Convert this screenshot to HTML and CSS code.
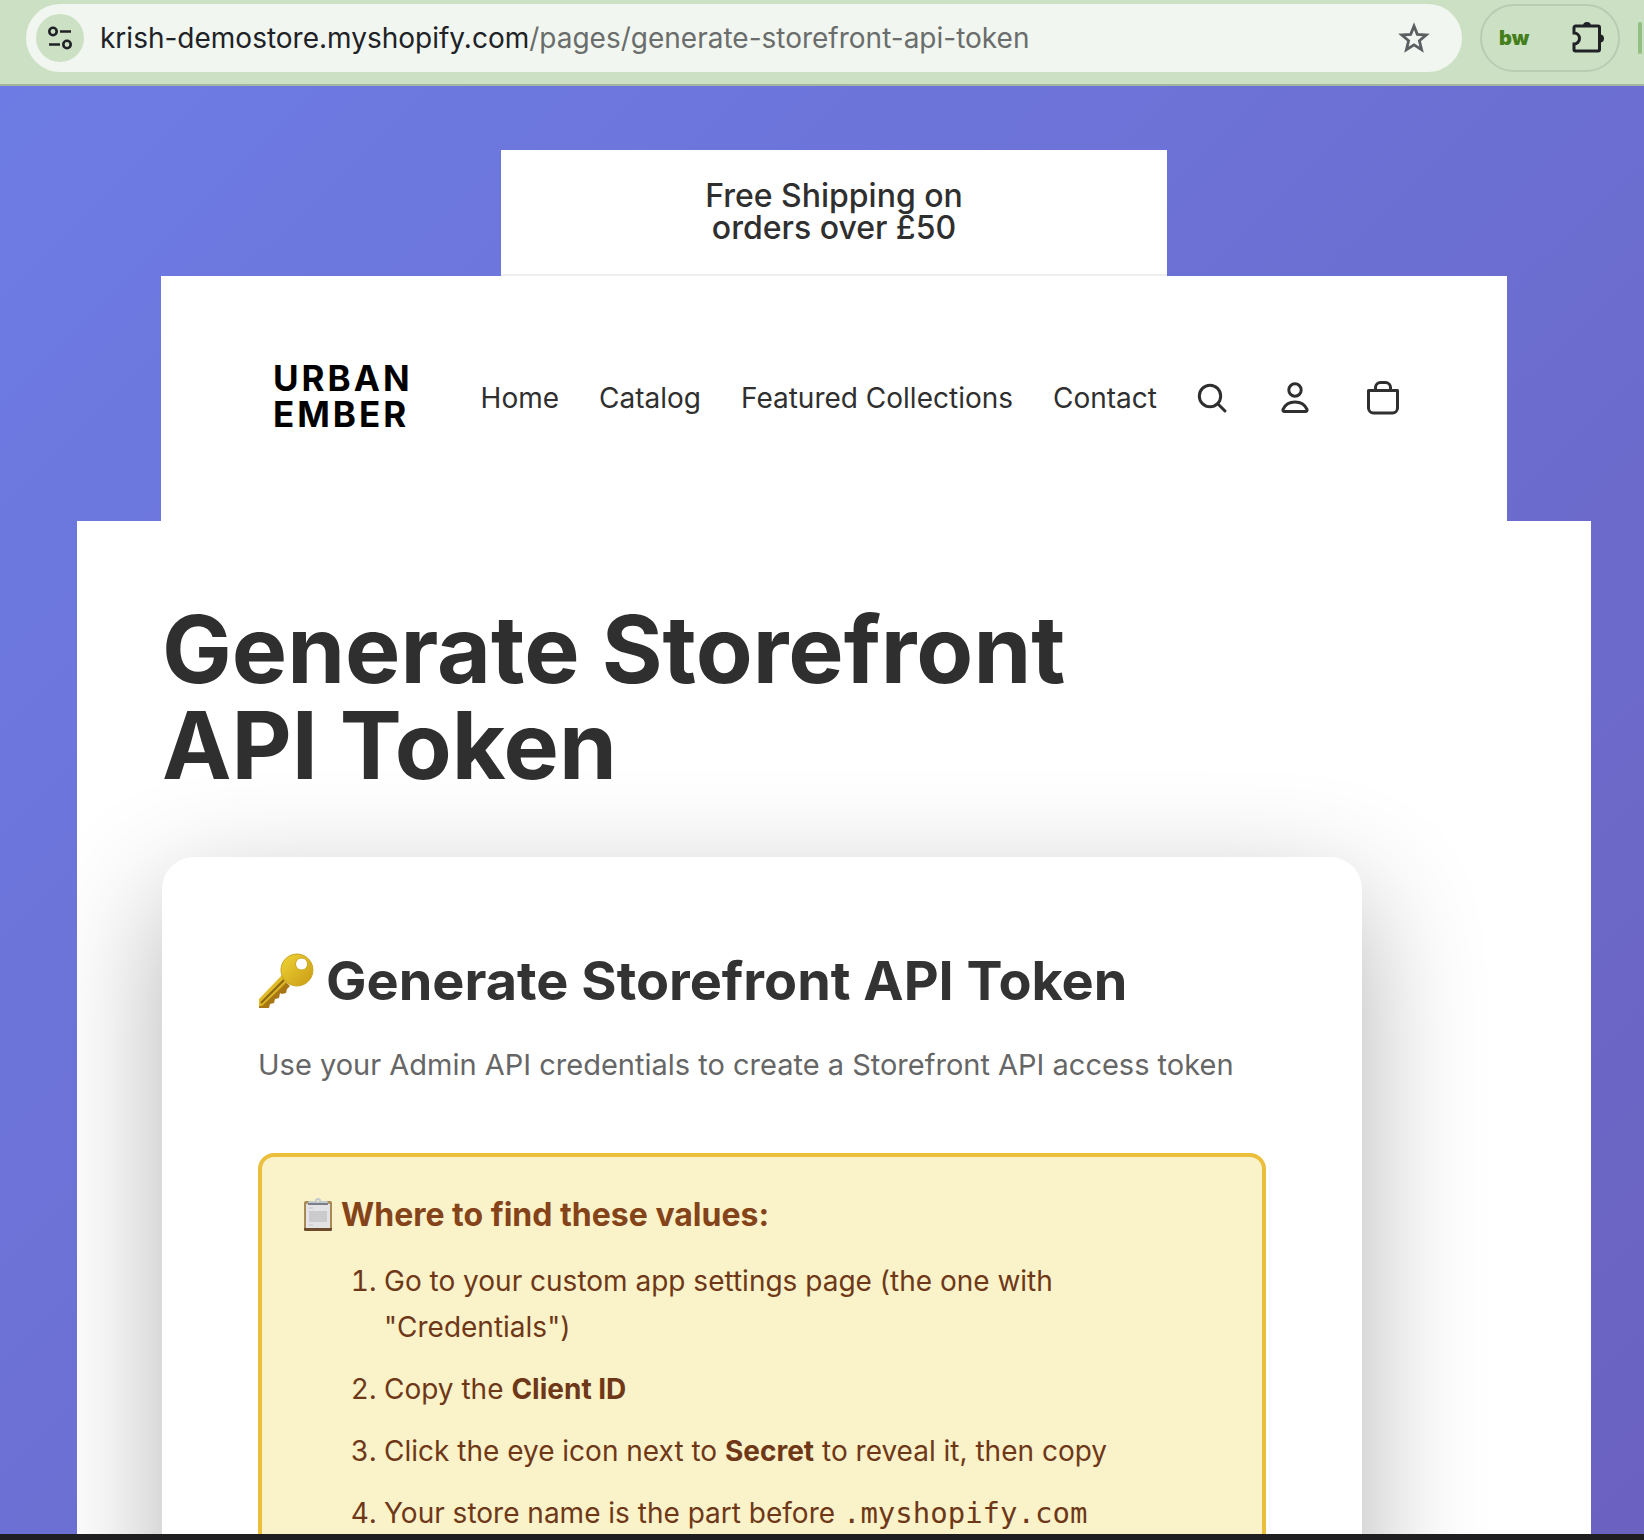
FILE: index.html
```html
<!DOCTYPE html>
<html lang="en">
<head>
<meta charset="utf-8">
<meta name="viewport" content="width=device-width, initial-scale=1">
<title>Generate Storefront API Token</title>
<link rel="stylesheet" href="styles.css">
</head>
<body>
<div class="toolbar">
  <div class="address">
    <button class="site-info" aria-label="View site information">
      <svg width="24" height="24" viewBox="0 0 24 24" fill="none" stroke="#202226" stroke-width="2.6"><circle cx="5" cy="5.500" r="3.700"/><path d="M12 5.500h11M1 18.500h11"/><circle cx="19" cy="18.500" r="3.700"/></svg>
    </button>
    <div class="url"><span class="host">krish-demostore.myshopify.com</span>/pages/generate-storefront-api-token</div>
    <button class="bookmark" aria-label="Bookmark this page">
      <svg width="32" height="32" viewBox="0 0 32 32" fill="none" stroke="#5c5e61" stroke-width="2.800"><path d="M16 4l3.300 8.300 9 .7-6.900 5.800 2.200 8.900L16 22.900l-7.600 4.800 2.200-8.900L3.700 13l9-.7z"/></svg>
    </button>
  </div>
  <div class="extensions">
    <button class="bw" aria-label="bw extension">bw</button>
    <button aria-label="Extensions">
      <svg width="34" height="34" viewBox="0 0 34 34"><path d="M5 5h22a1.500 1.500 0 0 1 1.500 1.500v22A1.500 1.500 0 0 1 27 30H4.500A1.500 1.500 0 0 1 3 28.500V23a5.500 5.500 0 0 0 0-11V6.500A1.500 1.500 0 0 1 4.500 5z" fill="none" stroke="#202226" stroke-width="3"/><path d="M12 5a4 4 0 0 1 8 0zM29 13.500a4 4 0 0 1 0 8z" fill="#202226"/></svg>
    </button>
  </div>
  <span class="divider"></span>
</div>

<div class="page">
  <div class="announcement"><p>Free Shipping on orders over £50</p></div>

  <header class="store-header">
    <a class="logo" href="#">URBAN<br>EMBER</a>
    <nav class="menu">
      <a href="#">Home</a><a href="#">Catalog</a><a href="#">Featured Collections</a><a href="#">Contact</a>
    </nav>
    <div class="actions">
      <button aria-label="Search"><svg width="40" height="40" viewBox="0 0 40 40" fill="none" stroke="#2f2f2f" stroke-width="3" stroke-linecap="round"><circle cx="19" cy="18" r="10.700"/><path d="M27 26l7 7"/></svg></button>
      <button aria-label="Account"><svg width="40" height="40" viewBox="2 0 40 40" fill="none" stroke="#2f2f2f" stroke-width="3" stroke-linejoin="round"><circle cx="20" cy="12" r="6.200"/><path d="M9.500 33.500h21a1.600 1.600 0 0 0 1.500-2.200C30 27 25.500 24 20 24S10 27 8 31.300a1.600 1.600 0 0 0 1.500 2.200z"/></svg></button>
      <button aria-label="Cart"><svg width="40" height="40" viewBox="0 0 40 40" fill="none" stroke="#2f2f2f" stroke-width="3"><path d="M5.500 12.500h29v17.500a5 5 0 0 1-5 5h-19a5 5 0 0 1-5-5zM12.500 12V9.500a5 5 0 0 1 5-5h5a5 5 0 0 1 5 5V12" stroke-linejoin="round"/></svg></button>
    </div>
  </header>

  <main class="content">
    <h1>Generate Storefront API Token</h1>
    <section class="card">
      <h2>
        <svg class="key" width="56" height="56" viewBox="0 0 56 56" aria-hidden="true">
          <defs><linearGradient id="gold" x1="0" y1="0" x2="1" y2="1"><stop offset="0" stop-color="#efd436"/><stop offset="1" stop-color="#c99b15"/></linearGradient></defs>
          <path d="M23 24l9 9-3 3-1 4-4 1-2-1-1 5-4 1-1 4-4 1-1 4H1v-8z" fill="#a87613"/>
          <path d="M24 22l6 6L4 53H1v-7z" fill="url(#gold)"/><path d="M26 27L3 50" stroke="#8b6513" stroke-width="2"/>
          <path d="M39 1a16 16 0 1 1-.1 0zm4.500 4a6 6 0 1 0 .1 0z" fill="url(#gold)" stroke="#c9a51e" stroke-width="1" fill-rule="evenodd"/>
        </svg>
        <span>Generate Storefront API Token</span>
      </h2>
      <p class="lead">Use your Admin API credentials to create a Storefront API access token</p>
      <div class="notice">
        <h3>
          <svg width="30" height="34" viewBox="0 0 30 34" aria-hidden="true"><rect x="1" y="3" width="28" height="30" rx="2" fill="#a98a55"/><path d="M1 30h28v1.500a1.500 1.500 0 0 1-1.500 1.500h-25A1.500 1.500 0 0 1 1 31.500z" fill="#6d4c2c"/><path d="M3 6h24v24H3z" fill="#e3e3e5"/><path d="M6 13h18v11H6z" fill="#cbcbcd"/><path d="M6 10h4M6 27h4" stroke="#c4c4c6"/><path d="M4 6l2-3h6a3 3 0 0 1 6 0h6l2 3z" fill="#c3c9d1"/><path d="M5 6h20" stroke="#7d7f88" stroke-width="2"/><circle cx="15" cy="3" r="1" fill="#faf2c8"/></svg>
          <span>Where to find these values:</span>
        </h3>
        <ol>
          <li>Go to your custom app settings page (the one with "Credentials")</li>
          <li>Copy the <strong>Client ID</strong></li>
          <li>Click the eye icon next to <strong>Secret</strong> to reveal it, then copy</li>
          <li>Your store name is the part before <code>.myshopify.com</code></li>
        </ol>
      </div>
    </section>
  </main>
</div>
<div class="bottom-edge"></div>
</body>
</html>
```
FILE: styles.css
```css
* { box-sizing: border-box; }

body {
  margin: 0;
  height: 100vh;
  overflow: hidden;
  display: flex;
  flex-direction: column;
  font-family: Inter, "Liberation Sans", sans-serif;
  color: #2f2f2f;
}

h1, h2, h3, p, ol { margin: 0; }
a { color: inherit; text-decoration: none; }
button {
  display: flex;
  align-items: center;
  justify-content: center;
  padding: 0;
  border: 0;
  background: none;
  color: inherit;
  font: inherit;
}
svg { display: block; flex: none; }

/* Browser toolbar */
.toolbar {
  flex: none;
  display: flex;
  align-items: flex-start;
  height: 86px;
  padding: 4px 2px 0 26px;
  background: #cce0c4;
  border-bottom: 2px solid #a3b59e;
}
.address {
  flex: 1;
  display: flex;
  align-items: center;
  height: 68px;
  padding: 0 32px 0 10px;
  border-radius: 34px;
  background: #f1f6f0;
}
.site-info {
  width: 48px;
  height: 48px;
  border-radius: 50%;
  background: #cce0c4;
}
.url {
  flex: 1;
  margin-left: 16px;
  font-size: 28px;
  line-height: 32px;
  white-space: nowrap;
  color: #6a6d6b;
}
.host { color: #202226; }
.extensions {
  display: flex;
  align-items: center;
  justify-content: space-between;
  width: 140px;
  height: 68px;
  margin-left: 18px;
  padding: 0 13px 0 17px;
  border: 2px solid #b8ccb2;
  border-radius: 34px;
}
.bw {
  font-size: 20px;
  font-weight: 900;
  color: #457f1c;
}
.divider {
  width: 4px;
  height: 32px;
  margin: 18px 0 0 18px;
  border-radius: 2px;
  background: #93bf80;
}

/* Store page */
.page {
  flex: 1;
  min-height: 0;
  overflow: hidden;
  padding: 64px 53px 0 77px;
  background: linear-gradient(135deg, #6d7ce4, #6b62c0);
}
.announcement {
  max-width: 666px;
  margin: 0 auto;
  padding: 30px 0;
  border-bottom: 2px solid #eee;
  background: #fff;
}
.announcement p {
  width: 280px;
  margin: 0 auto;
  font-size: 32px;
  font-weight: 500;
  line-height: 32px;
  text-align: center;
}
.store-header {
  display: flex;
  align-items: center;
  height: 245px;
  margin: 0 84px;
  padding: 0 104px 2px 112px;
  background: #fff;
}
.logo {
  padding-bottom: 4px;
  font-size: 35px;
  font-weight: 700;
  line-height: 36px;
  letter-spacing: 3px;
  color: #000;
}
.menu {
  display: flex;
  gap: 40px;
  margin-left: 68px;
  font-size: 28px;
  line-height: 40px;
  white-space: nowrap;
}
.actions {
  display: flex;
  gap: 46px;
  margin-left: auto;
}
.content {
  padding: 80px 85px;
  background: #fff;
  overflow: hidden;
}
.content h1 {
  max-width: 1000px;
  font-size: 93px;
  font-weight: 700;
  line-height: 96px;
}
.card {
  max-width: 1200px;
  margin-top: 64px;
  padding: 90px 96px;
  border-radius: 32px;
  background: #fff;
  box-shadow: 0 40px 120px rgba(0, 0, 0, 0.3);
}
.card h2 {
  display: flex;
  align-items: center;
  gap: 12px;
  font-size: 54px;
  line-height: 68px;
  color: #333;
}
.lead {
  margin-top: 26px;
  font-size: 29px;
  line-height: 48px;
  color: #666;
  white-space: nowrap;
}
.notice {
  margin-top: 64px;
  padding: 38px 41px;
  border: 4px solid #ebbe3c;
  border-radius: 16px;
  background: #faf2c8;
}
.notice h3 {
  display: flex;
  align-items: center;
  gap: 8px;
  font-size: 32px;
  line-height: 40px;
  color: #85431a;
}
.notice ol {
  margin-top: 23px;
  padding-left: 81px;
  font-size: 28px;
  line-height: 46px;
  color: #6e3818;
}
.notice li { margin-bottom: 16px; }
.notice code {
  font-family: "DejaVu Sans Mono", monospace;
  font-size: 29px;
}

.bottom-edge {
  flex: none;
  height: 6px;
  background: #1f1f22;
}
```
